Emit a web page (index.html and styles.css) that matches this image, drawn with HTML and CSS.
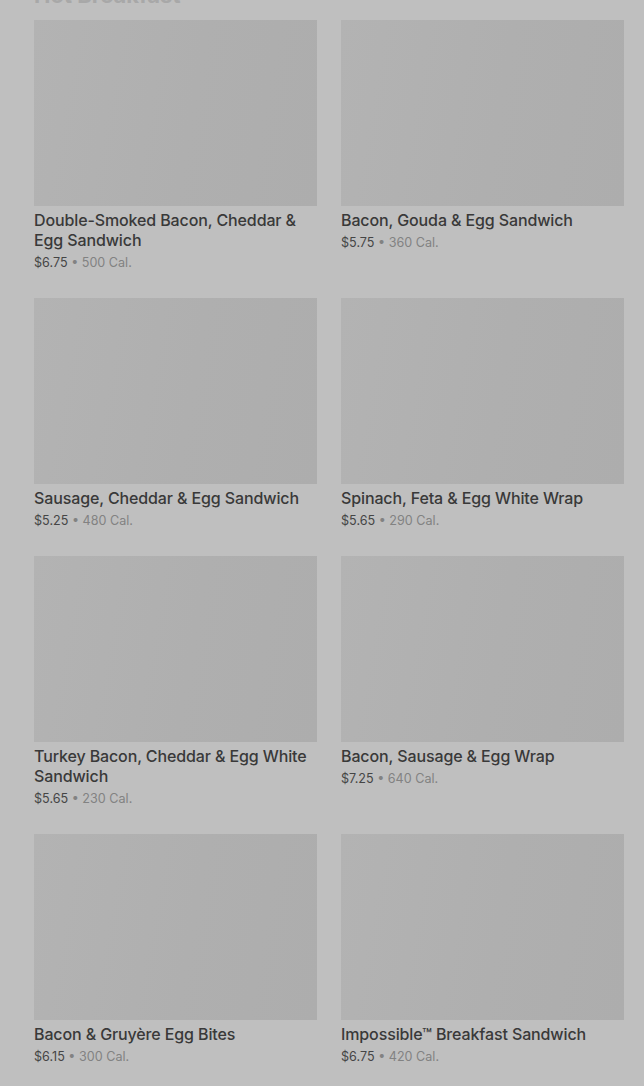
FILE: index.html
```html
<!DOCTYPE html>
<html lang="en">
<head>
<meta charset="utf-8">
<title>Hot Breakfast</title>
<link rel="stylesheet" href="styles.css">
</head>
<body>
<main class="page">
  <h2 class="section-title">Hot Breakfast</h2>
  <div class="grid">
    <article class="card">
      <div class="thumb"></div>
      <h3 class="name">Double-Smoked Bacon, Cheddar &amp; Egg Sandwich</h3>
      <p class="meta"><span class="price">$6.75</span> <span class="dot">•</span> <span class="cal">500 Cal.</span></p>
    </article>
    <article class="card">
      <div class="thumb"></div>
      <h3 class="name">Bacon, Gouda &amp; Egg Sandwich</h3>
      <p class="meta"><span class="price">$5.75</span> <span class="dot">•</span> <span class="cal">360 Cal.</span></p>
    </article>
    <article class="card">
      <div class="thumb"></div>
      <h3 class="name">Sausage, Cheddar &amp; Egg Sandwich</h3>
      <p class="meta"><span class="price">$5.25</span> <span class="dot">•</span> <span class="cal">480 Cal.</span></p>
    </article>
    <article class="card">
      <div class="thumb"></div>
      <h3 class="name">Spinach, Feta &amp; Egg White Wrap</h3>
      <p class="meta"><span class="price">$5.65</span> <span class="dot">•</span> <span class="cal">290 Cal.</span></p>
    </article>
    <article class="card">
      <div class="thumb"></div>
      <h3 class="name">Turkey Bacon, Cheddar &amp; Egg White Sandwich</h3>
      <p class="meta"><span class="price">$5.65</span> <span class="dot">•</span> <span class="cal">230 Cal.</span></p>
    </article>
    <article class="card">
      <div class="thumb"></div>
      <h3 class="name">Bacon, Sausage &amp; Egg Wrap</h3>
      <p class="meta"><span class="price">$7.25</span> <span class="dot">•</span> <span class="cal">640 Cal.</span></p>
    </article>
    <article class="card">
      <div class="thumb"></div>
      <h3 class="name">Bacon &amp; Gruyère Egg Bites</h3>
      <p class="meta"><span class="price">$6.15</span> <span class="dot">•</span> <span class="cal">300 Cal.</span></p>
    </article>
    <article class="card">
      <div class="thumb"></div>
      <h3 class="name">Impossible™ Breakfast Sandwich</h3>
      <p class="meta"><span class="price">$6.75</span> <span class="dot">•</span> <span class="cal">420 Cal.</span></p>
    </article>
  </div>
</main>
</body>
</html>
```

FILE: styles.css
```css
html, body {
  margin: 0;
  padding: 0;
  background: #bfbfbf;
}

body {
  font-family: Inter, "Liberation Sans", Arial, sans-serif;
  color: #3a3a3a;
  overflow: hidden;
  padding-top: 1px;
}

.page {
  padding: 0 20px 0 34px;
}

.section-title {
  margin: -19px 0 0;
  height: 18px;
  font-size: 22px;
  line-height: 26px;
  font-weight: 700;
  color: #a8a8a8;
}

.grid {
  display: grid;
  grid-template-columns: 283px 283px;
  column-gap: 24px;
  row-gap: 26px;
  margin-top: 20px;
  align-items: start;
}

.card {
  display: flex;
  flex-direction: column;
}

.thumb {
  height: 186px;
  background: linear-gradient(100deg, #b3b3b3 0%, #afafaf 55%, #adadad 100%);
}

.name {
  margin: 4px 0 0;
  font-size: 16px;
  line-height: 20px;
  font-weight: 500;
  color: #393939;
  letter-spacing: -0.12px;
}

.meta {
  margin: 4px 0 0;
  font-size: 12.6px;
  line-height: 18px;
  color: #454545;
}

.price {
  color: #454545;
}

.dot,
.cal {
  color: #828282;
}
```
